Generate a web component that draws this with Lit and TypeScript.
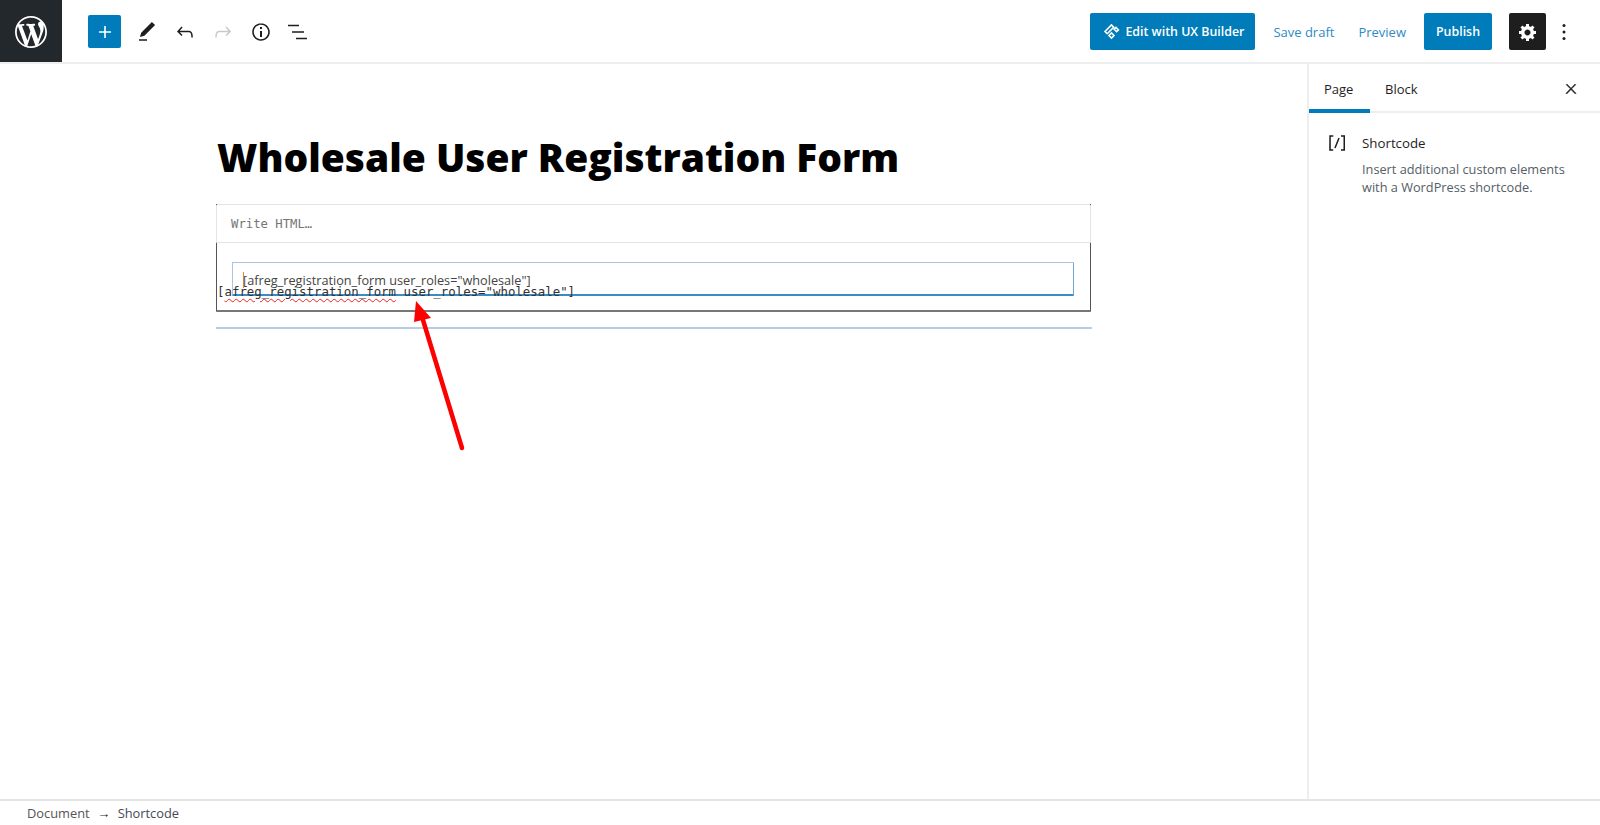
import { LitElement, html, css, svg } from "lit";
import { customElement } from "lit/decorators.js";

const ic = (d: string, size = 24, box = 24) =>
  html`<svg width=${size} height=${size} viewBox="0 0 ${box} ${box}" fill="currentColor">${svg`<path d=${d}></path>`}</svg>`;

const WP = "M20 10c0-5.51-4.49-10-10-10C4.48 0 0 4.49 0 10c0 5.52 4.48 10 10 10 5.51 0 10-4.48 10-10zM7.78 15.37L4.37 6.22c.55-.02 1.17-.08 1.17-.08.5-.06.44-1.13-.06-1.11 0 0-1.45.11-2.37.11-.18 0-.37 0-.58-.01C4.12 2.69 6.87 1.11 10 1.11c2.33 0 4.45.87 6.05 2.34-.68-.11-1.65.39-1.65 1.58 0 .74.45 1.36.9 2.1.35.61.55 1.36.55 2.46 0 1.49-1.4 5-1.4 5l-3.03-8.37c.54-.02.82-.17.82-.17.5-.05.44-1.25-.06-1.22 0 0-1.44.12-2.38.12-.87 0-2.33-.12-2.33-.12-.5-.03-.56 1.2-.06 1.22l.92.08 1.26 3.41zM17.41 10c.24-.64.74-1.87.43-4.25.7 1.29 1.05 2.71 1.05 4.25 0 3.29-1.73 6.24-4.4 7.78.97-2.59 1.94-5.2 2.92-7.78zM6.1 18.09C3.12 16.65 1.11 13.53 1.11 10c0-1.3.23-2.48.72-3.59C3.25 10.3 4.67 14.2 6.1 18.09zm4.03-6.63l2.58 6.98c-.86.29-1.76.45-2.71.45-.79 0-1.57-.11-2.29-.33.81-2.38 1.62-4.74 2.42-7.1z";
const PLUS = "M18 11.2h-5.2V6h-1.6v5.2H6v1.6h5.2V18h1.6v-5.2H18z";
const PEN = "M20.1 5.1L16.9 2 6.2 12.7l-1.3 4.4 4.5-1.3L20.1 5.1zM4 20.8h8v-1.5H4v1.5z";
const UNDO = "M18.3 11.7c-.6-.6-1.4-.9-2.3-.9H6.7l2.9-3.3-1.1-1-4.5 5L8.5 16l1-1-2.7-2.7H16c.5 0 .9.2 1.3.5 1 1 1 3.4 1 4.5v.3h1.5v-.2c0-1.5 0-4.3-1.5-5.7z";
const REDO = "M15.6 6.5l-1.1 1 2.9 3.3H8c-.9 0-1.7.3-2.3.9-1.4 1.5-1.4 4.2-1.4 5.6v.2h1.5v-.3c0-1.1 0-3.5 1-4.5.3-.3.7-.5 1.3-.5h9.2L14.5 15l1.1 1.1 4.6-4.6-4.6-5z";
const INFO = "M12 3.2c-4.8 0-8.8 3.9-8.8 8.8 0 4.8 3.9 8.8 8.8 8.8 4.8 0 8.8-3.9 8.8-8.8 0-4.8-4-8.8-8.8-8.8zm0 16c-4 0-7.2-3.3-7.2-7.2C4.8 8 8 4.8 12 4.8s7.2 3.3 7.2 7.2c0 4-3.2 7.2-7.2 7.2zM11 17h2v-6h-2v6zm0-8h2V7h-2v2z";
const LIST = "M1 4.7h11v1.6H1zM5 11.2h12v1.6H5zM9 17.7h11v1.6H9z";
const COG = "M18 12h-2.18c-.17.7-.44 1.35-.81 1.93l1.54 1.54-2.1 2.1-1.54-1.54c-.58.36-1.23.63-1.91.79V19H8v-2.18c-.68-.16-1.33-.43-1.91-.79l-1.54 1.54-2.12-2.12 1.54-1.54c-.36-.58-.63-1.23-.79-1.91H1V9.03h2.17c.16-.7.44-1.35.8-1.94L2.43 5.55l2.1-2.1 1.54 1.54c.58-.37 1.24-.64 1.93-.81V2h3v2.18c.68.16 1.33.43 1.91.79l1.54-1.54 2.12 2.12-1.54 1.54c.36.59.64 1.24.8 1.94H18V12zm-8.5 1.5c1.66 0 3-1.34 3-3s-1.34-3-3-3-3 1.34-3 3 1.34 3 3 3z";
const CLOSE = "M13 11.8l6.1-6.3-1-1-6.1 6.2-6.1-6.2-1 1 6.1 6.3-6.5 6.7 1 1 6.5-6.6 6.5 6.6 1-1z";
const SHORT = "M16 4.2v1.5h2.5v12.5H16v1.5h4V4.2h-4zM4.2 19.8h4v-1.5H5.8V5.8h2.5V4.2h-4l-.1 15.6zm5.1-3.1l1.4.6 4-10-1.4-.6-4 10z";

@customElement("app-root")
export class AppRoot extends LitElement {
  static styles = css`
    :host { display: block; height: 825px; overflow: hidden; background: #fff; color: #1e1e1e;
      font-family: "Open Sans", "Noto Sans", sans-serif; font-size: 13px; }
    * { box-sizing: border-box; }
    svg { display: block; flex: none; }
    .page { display: flex; flex-direction: column; height: 825px; }

    header { height: 64px; flex: none; display: flex; align-items: flex-start; border-bottom: 2px solid #eeeeee; }
    .wp { width: 62px; height: 62px; padding-top: 1px; background: #23282d; color: #fff; display: flex; align-items: center; justify-content: center; flex: none; }
    .tools { display: flex; align-items: center; height: 62px; padding: 1px 0 0 26px; flex: 1; }
    .add { width: 33px; height: 33px; background: #007cba; color: #fff; border-radius: 2px; display: flex; align-items: center; justify-content: center; margin-right: 14px; }
    .tool { width: 24px; height: 24px; margin-right: 14px; color: #1e1e1e; }
    .tool.off { color: #c9c9c9; }
    .actions { display: flex; align-items: center; height: 62px; padding-top: 1px; }
    .btn { height: 37px; background: #007cba; color: #fff; border-radius: 2px; display: flex; align-items: center; font-weight: 600; font-size: 12.4px; }
    .ux { width: 165px; padding-left: 13px; gap: 5px; margin-right: 18px; }
    .link { color: #2f8ac6; font-size: 13px; }
    .save { margin-right: 24px; }
    .preview { margin-right: 18px; }
    .publish { width: 68px; justify-content: center; margin-right: 17px; }
    .gear { width: 37px; height: 37px; background: #1e1e1e; color: #fff; border-radius: 2px; display: flex; align-items: center; justify-content: center; margin-right: 6px; }
    .more { width: 24px; height: 24px; margin-right: 24px; }

    main { flex: 1; display: flex; min-height: 0; }
    .content { flex: 1; min-width: 0; padding: 64px 0 0 216px; }
    h1 { margin: 0 0 0 1px; font-size: 38.9px; line-height: 58px; font-weight: 800; color: #000; letter-spacing: 0; }
    .block { position: relative; width: 875px; margin-top: 18px; }
    .box { width: 875px; height: 108px; border: 1px solid #555; border-top: 0; border-bottom: 2px solid #777; border-radius: 0 0 1px 1px; position: relative; }
    .toolbar { height: 39px; margin: 0 -1px; background: #fff; border: 1px solid #e2e4e7; display: flex; align-items: center; padding-left: 14px;
      font-family: "DejaVu Sans Mono", monospace; font-size: 12.25px; color: #757575; border-radius: 2px 2px 0 0; }
    .input { margin: 19px 0 0 15px; width: 842px; height: 34px; border: 1px solid #a9c5e0; border-bottom: 2px solid #3a8cc7; border-right: 1px solid #6da5d3; border-radius: 1px;
      padding: 8px 0 0 10px; font-size: 12.7px; line-height: 18px; color: #444; white-space: nowrap; }
    .caret { display: inline-block; width: 1px; height: 16px; margin-right: -1px; background: #d98a2b; vertical-align: -3px; }
    .mono { position: absolute; left: 1px; top: 80px; font-family: "DejaVu Sans Mono", monospace; font-size: 12.4px; line-height: 16px; color: #333; white-space: pre; }
    .mono span { text-decoration: underline wavy #ee2222 1px; text-underline-offset: 2px; }
    .rule { width: 876px; height: 2px; background: #b8cde4; margin-top: 15px; }
    .arrow { position: absolute; left: 180px; top: 90px; }

    aside { width: 293px; flex: none; border-left: 2px solid #eeeeee; }
    .tabs { height: 49px; display: flex; border-bottom: 2px solid #eeeeee; }
    .tab { height: 49px; display: flex; align-items: center; font-size: 13px; padding: 0 15px; color: #1e1e1e; }
    .tab.on { width: 61px; border-bottom: 4px solid #007cba; padding-top: 4px; }
    .tab.block-tab { padding-left: 15px; }
    .x { margin-left: auto; margin-right: 21px; margin-top: 17px; stroke: currentColor; stroke-width: 0.8; }
    .card { display: flex; padding: 18px 16px 0 16px; }
    .card-ic { width: 30px; flex: none; margin-right: 7px; }
    .card h2 { margin: 0 0 5px; font-size: 13.3px; font-weight: 400; line-height: 24px; color: #1e1e1e; }
    .card p { margin: 0; font-size: 12.75px; line-height: 18.2px; color: #555d66; width: 225px; }

    footer { height: 26px; flex: none; border-top: 2px solid #e4e4e4; display: flex; align-items: center; padding-left: 27px; color: #555; font-size: 12.85px; }
    footer .sep { margin: 0 7.5px; color: #1e1e1e; font-size: 13px; }
    footer .cur { color: #444a55; }
  `;

  render() {
    return html`<div class="page">
      <header>
        <div class="wp">${ic(WP, 32, 20)}</div>
        <div class="tools">
          <div class="add">${ic(PLUS)}</div>
          <div class="tool">${ic(PEN)}</div>
          <div class="tool">${ic(UNDO)}</div>
          <div class="tool off">${ic(REDO)}</div>
          <div class="tool">${ic(INFO)}</div>
          <div class="tool">${ic(LIST)}</div>
        </div>
        <div class="actions">
          <div class="btn ux">
            <svg width="17" height="17" viewBox="0 0 17 17" fill="none" stroke="#fff" stroke-width="1.6">
              <path d="M2 8.5L8.5 2l2.2 2.2L4.2 10.7zM6 12.5l2.5-2.5L11 12.5 8.5 15zM11.2 6.3l1.8-1.8 2.4 2.4-1.8 1.8z"></path>
            </svg>
            Edit with UX Builder
          </div>
          <span class="link save">Save draft</span>
          <span class="link preview">Preview</span>
          <div class="btn publish">Publish</div>
          <div class="gear">${ic(COG, 20, 20)}</div>
          <div class="more">
            <svg width="24" height="24" viewBox="0 0 24 24" fill="#1e1e1e"><circle cx="12" cy="5.5" r="1.5"></circle><circle cx="12" cy="12" r="1.5"></circle><circle cx="12" cy="18.5" r="1.5"></circle></svg>
          </div>
        </div>
      </header>
      <main>
        <div class="content">
          <h1>Wholesale User Registration Form</h1>
          <div class="block">
            <div class="box">
              <div class="toolbar">Write HTML…</div>
              <div class="input"><i class="caret"></i>[afreg_registration_form user_roles="wholesale"]</div>
            </div>
            <div class="mono">[<span>afreg_registration_form</span> user_roles="wholesale"]</div>
            <div class="rule"></div>
            <svg class="arrow" width="80" height="165" viewBox="0 0 80 165">
              <path d="M66 154L27 26" stroke="#ff0000" stroke-width="4.5" stroke-linecap="round" fill="none"></path>
              <path d="M20 7L35 24L18 28Z" fill="#ff0000"></path>
            </svg>
          </div>
        </div>
        <aside>
          <div class="tabs">
            <div class="tab on">Page</div>
            <div class="tab block-tab">Block</div>
            <div class="x">${ic(CLOSE, 16)}</div>
          </div>
          <div class="card">
            <div class="card-ic">${ic(SHORT)}</div>
            <div>
              <h2>Shortcode</h2>
              <p>Insert additional custom elements with a WordPress shortcode.</p>
            </div>
          </div>
        </aside>
      </main>
      <footer>
        <span>Document</span><span class="sep">→</span><span class="cur">Shortcode</span>
      </footer>
    </div>`;
  }
}
